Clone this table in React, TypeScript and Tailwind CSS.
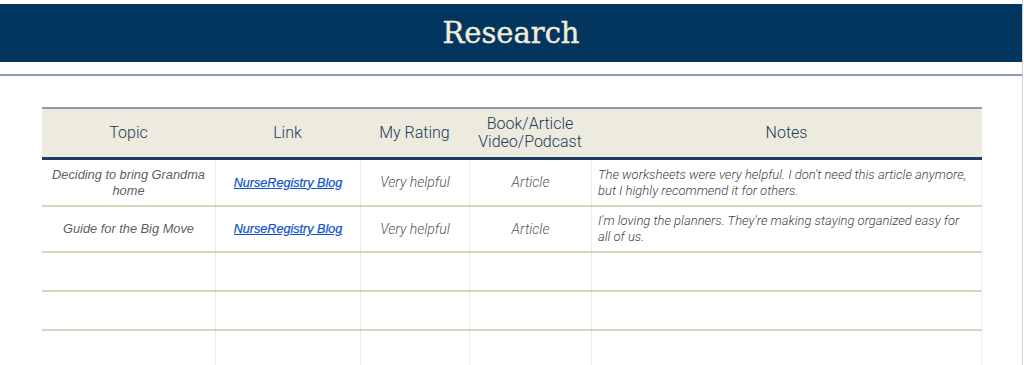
import React from "react";

const cols = "grid grid-cols-[173px_145px_109px_122px_391px]";

const rows = [
  {
    topic: "Deciding to bring Grandma home",
    link: "NurseRegistry Blog",
    rating: "Very helpful",
    type: "Article",
    notes: "The worksheets were very helpful. I don't need this article anymore, but I highly recommend it for others.",
    h: "h-[45px]",
  },
  {
    topic: "Guide for the Big Move",
    link: "NurseRegistry Blog",
    rating: "Very helpful",
    type: "Article",
    notes: "I'm loving the planners. They're making staying organized easy for all of us.",
    h: "h-[44px]",
  },
  { topic: "", link: "", rating: "", type: "", notes: "", h: "h-[37px]" },
  { topic: "", link: "", rating: "", type: "", notes: "", h: "h-[37px]" },
  { topic: "", link: "", rating: "", type: "", notes: "", h: "h-[40px]" },
];

export default function App() {
  return (
    <div className="w-[1024px] h-[365px] overflow-hidden bg-white">
      <div className="w-[1023px] h-[365px] border-r border-[#d4d4d4] pt-[4px]">
        <div className="h-[58px] bg-[#03365f] flex items-center justify-center">
          <span
            className="text-[29px] text-[#f3ecd6] leading-none [-webkit-text-stroke:0.4px_#f3ecd6]"
            style={{ fontFamily: '"DejaVu Serif", serif' }}
          >
            Research
          </span>
        </div>
        <div className="mt-[12px] h-[2px] bg-[#8a9bb5]" />
        <div className="mt-[31px] ml-[42px] w-[940px]">
          <div
            className={`${cols} h-[53px] bg-[#ecebdd] border-t-2 border-b-[3px] border-t-[#8d99b1] border-b-[#1d3c63] text-[#22385c] text-[16px] font-light`}
            style={{ fontFamily: "Roboto, sans-serif" }}
          >
            <div className="flex items-center justify-center">Topic</div>
            <div className="flex items-center justify-center">Link</div>
            <div className="flex items-center justify-center">My Rating</div>
            <div className="flex items-center justify-center text-center leading-[18px]">
              Book/Article
              <br />
              Video/Podcast
            </div>
            <div className="flex items-center justify-center">Notes</div>
          </div>
          {rows.map((r, i) => (
            <div
              key={i}
              className={`${cols} ${r.h} box-content border-b-2 border-[#d3d7bd] border-r border-r-[#ecece0]`}
            >
              <div
                className="flex items-center justify-center text-center px-2 italic text-[12.8px] leading-[16px] text-[#5f5f5f]"
                style={{ fontFamily: '"Liberation Sans", Arial, sans-serif' }}
              >
                {r.topic}
              </div>
              <div
                className="flex items-center justify-center border-l border-[#ecece0]"
                style={{ fontFamily: '"Liberation Sans", Arial, sans-serif' }}
              >
                {r.link && (
                  <a className="italic underline text-[12.6px] text-[#1155cc] leading-[16px] [-webkit-text-stroke:0.25px_#1155cc]">
                    {r.link}
                  </a>
                )}
              </div>
              <div
                className="flex items-center justify-center border-l border-[#ecece0] italic font-light text-[14px] text-[#555555]"
                style={{ fontFamily: "Roboto, sans-serif" }}
              >
                {r.rating}
              </div>
              <div
                className="flex items-center justify-center border-l border-[#ecece0] italic font-light text-[14px] text-[#555555]"
                style={{ fontFamily: "Roboto, sans-serif" }}
              >
                {r.type}
              </div>
              <div
                className="flex items-center border-l border-[#ecece0] pl-[6px] pr-[12px] italic font-light text-[13px] leading-[16px] text-[#444444]"
                style={{ fontFamily: "Roboto, sans-serif" }}
              >
                {r.notes}
              </div>
            </div>
          ))}
        </div>
      </div>
    </div>
  );
}
